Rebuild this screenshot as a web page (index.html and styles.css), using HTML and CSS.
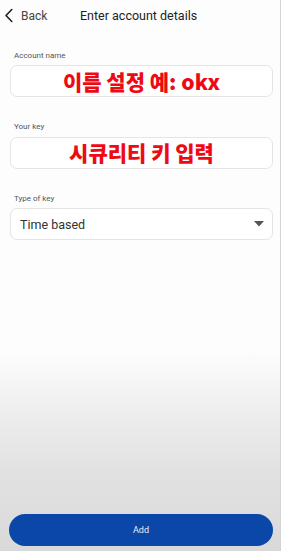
FILE: index.html
```html
<!DOCTYPE html>
<html>
<head>
<meta charset="utf-8">
<link rel="stylesheet" href="styles.css">
</head>
<body>
<div class="screen">
  <header class="topbar">
    <div class="back">
      <svg class="chev" width="10" height="15" viewBox="0 0 10 15"><path d="M7.8 1.5 L2 7.5 L7.8 13.5" fill="none" stroke="#222" stroke-width="1.6" stroke-linecap="round" stroke-linejoin="round"/></svg>
      <span>Back</span>
    </div>
    <div class="title">Enter account details</div>
  </header>
  <main class="form">
    <div class="field">
      <div class="label">Account name</div>
      <div class="box"><span class="red">이름 설정 예: okx</span></div>
    </div>
    <div class="field">
      <div class="label">Your key</div>
      <div class="box"><span class="red">시큐리티 키 입력</span></div>
    </div>
    <div class="field">
      <div class="label">Type of key</div>
      <div class="box select"><span class="val">Time based</span><svg width="10" height="6" viewBox="0 0 10 6"><path d="M0 0 H10 L5 5.5 Z" fill="#555"/></svg></div>
    </div>
  </main>
  <footer class="bottom">
    <button class="add">Add</button>
  </footer>
</div>
</body>
</html>
```
FILE: styles.css
```css
html, body { margin: 0; padding: 0; }
body {
  width: 281px;
  height: 551px;
  overflow: hidden;
  font-family: Roboto, "Noto Sans", sans-serif;
}
.screen {
  height: 551px;
  display: flex;
  flex-direction: column;
  background: linear-gradient(to bottom, #fefdfe 0, #fefdfe 350px, #ececec 420px, #e2e2e2 470px, #d9d9d9 551px);
  border-right: 1px solid #d4d4d4;
  box-sizing: border-box;
}
.topbar {
  height: 31px;
  display: flex;
  align-items: center;
  padding-left: 4px;
}
.back {
  display: flex;
  align-items: center;
  gap: 7px;
  font-size: 12px;
  color: #444;
  width: 76px;
}
.chev { display: block; }
.title {
  font-size: 12.5px;
  color: #222;
}
.form {
  padding: 20px 7px 0 10px;
  display: flex;
  flex-direction: column;
  gap: 25px;
  flex: 1;
}
.label {
  font-size: 8px;
  line-height: 9.4px;
  color: #555;
  margin-left: 4px;
  margin-bottom: 5px;
}
.box {
  height: 32px;
  border: 1px solid #e4e4e4;
  border-radius: 7px;
  background: #fff;
  box-sizing: border-box;
  display: flex;
  align-items: center;
  justify-content: center;
}
.red {
  font-family: "Noto Sans CJK KR", sans-serif;
  font-weight: 900;
  font-size: 21px;
  color: #ee0a14;
  line-height: 1;
}
.select {
  justify-content: space-between;
  padding: 0 8px 0 9px;
}
.val {
  font-size: 12.5px;
  color: #333;
}
.bottom {
  padding: 0 7px 5px 9px;
}
.add {
  width: 100%;
  height: 32px;
  border: none;
  border-radius: 16px;
  background: #0a47a9;
  color: #e8eef8;
  font-family: Roboto, sans-serif;
  font-size: 9px;
  display: block;
}
```
